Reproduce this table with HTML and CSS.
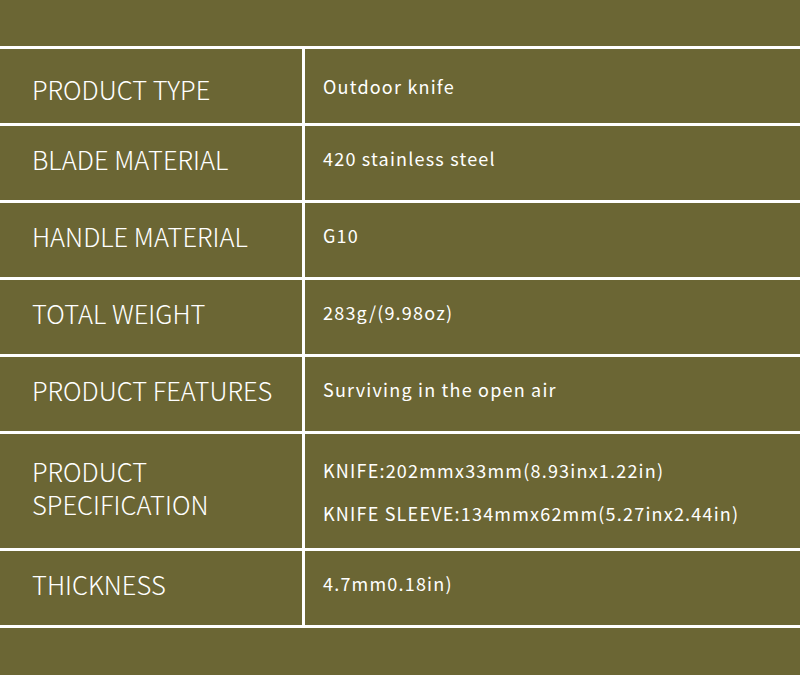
FILE: index.html
```html
<!DOCTYPE html>
<html>
<head>
<meta charset="utf-8">
<link rel="stylesheet" href="styles.css">
</head>
<body>
<div class="table">
  <div class="row first"><div class="label">PRODUCT TYPE</div><div class="value">Outdoor knife</div></div>
  <div class="row"><div class="label">BLADE MATERIAL</div><div class="value">420 stainless steel</div></div>
  <div class="row"><div class="label">HANDLE MATERIAL</div><div class="value">G10</div></div>
  <div class="row"><div class="label">TOTAL WEIGHT</div><div class="value">283g/(9.98oz)</div></div>
  <div class="row"><div class="label">PRODUCT FEATURES</div><div class="value">Surviving in the open air</div></div>
  <div class="row tall"><div class="label">PRODUCT<br>SPECIFICATION</div><div class="value multi"><div>KNIFE:202mmx33mm(8.93inx1.22in)</div><div>KNIFE SLEEVE:134mmx62mm(5.27inx2.44in)</div></div></div>
  <div class="row"><div class="label">THICKNESS</div><div class="value">4.7mm0.18in)</div></div>
</div>
</body>
</html>
```
FILE: styles.css
```css
html, body {
  margin: 0;
  padding: 0;
  background: #6b6634;
  width: 800px;
  height: 675px;
  overflow: hidden;
}
body {
  font-family: "Noto Sans CJK SC", "Noto Sans", sans-serif;
  color: #ffffff;
}
.table {
  margin-top: 46px;
  border-top: 3px solid #ffffff;
}
.row {
  display: grid;
  grid-template-columns: 305px 1fr;
  height: 74px;
  border-bottom: 3px solid #ffffff;
}
.row.tall {
  height: 114px;
}
.label {
  border-right: 3px solid #ffffff;
  display: flex;
  align-items: center;
  padding-left: 32px;
  padding-bottom: 10px;
  font-size: 25.5px;
  line-height: 33px;
  font-weight: 300;
}
.value {
  display: flex;
  align-items: center;
  padding-left: 18px;
  padding-bottom: 10px;
  font-size: 18px;
  letter-spacing: 1.2px;
  font-weight: 400;
}
.row.first .label {
  padding-bottom: 0;
  padding-top: 4px;
}
.row.first .value {
  padding-bottom: 0;
}
.row.tall .label {
  padding-bottom: 8px;
}
.value.multi {
  flex-direction: column;
  align-items: flex-start;
  justify-content: center;
  gap: 17px;
  line-height: 26px;
  padding-bottom: 0;
}
```
